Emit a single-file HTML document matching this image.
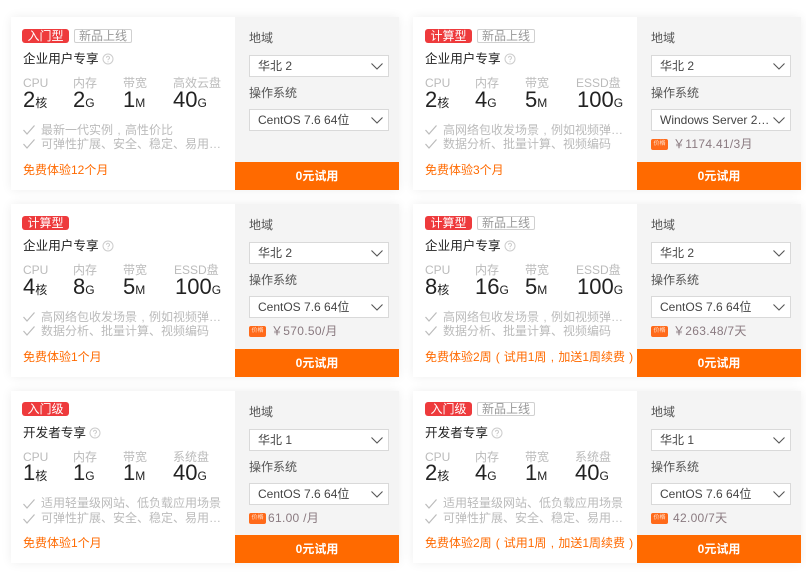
<!DOCTYPE html>
<html lang="zh-CN"><head><meta charset="utf-8"><title>试用</title>
<style>
html,body{margin:0;padding:0;background:#fff;width:806px;height:572px;overflow:hidden}
body{font-family:"Liberation Sans","Noto Sans CJK SC",sans-serif;font-size:12px;position:relative}
svg{display:block}
.c{position:absolute;width:388px;height:173px;background:#fff;box-shadow:0 0 10px rgba(0,0,0,.07)}
.c div,.c svg{position:absolute;white-space:nowrap}
.r{left:224px;top:0;width:164px;height:173px;background:#f4f4f4}
.t{left:11px;top:12px;width:47px;height:14px;line-height:14px;background:#ee3a3c;color:#fff;text-align:center;border-radius:3px}
.rc .t{left:12px}
.n{left:63px;top:12px;width:56px;height:12px;line-height:12px;border:1px solid #d0d0d0;border-radius:2px;color:#999;text-align:center}
.rc .n{left:64px}
.h{left:12px;top:33px;font-size:12.6px;line-height:18px;color:#222}
.q{top:36px}
.l{top:59px;line-height:14px;color:#bbb}
.v{top:70px;line-height:26px;font-size:22px;color:#222}
.v small{font-size:12px}
.k{left:12px}
.f{left:30px;line-height:14px;color:#bbb;width:180px}
.fr{left:12px;top:145px;line-height:16px;color:#ff6a00}
.lb{left:238px;line-height:16px;color:#555}
.s{left:238px;width:138px;height:20px;line-height:20px;background:#fff;border:1px solid #d9d9d9;color:#444}
.s span{position:absolute;left:8px;top:0}
.c .ar{left:121px;top:7px}
.b{left:224px;top:145px;width:164px;height:28px;line-height:28px;background:#ff6a00;color:#fff;text-align:center;font-weight:bold}
.pt{left:238px;top:122px;width:17px;height:11px;background:#ff6a1a;border-radius:2px;color:#ffe4d0;font-size:6px;line-height:11px;text-align:center}
.p{left:260px;top:119px;line-height:16px;color:#8a7a80;letter-spacing:.3px}
.pw{display:inline-block;width:12px;text-align:center}
.c3{height:172px}
.c3 .r{height:172px}
.c3 .t,.c3 .n{top:11px}
.c3 .v{top:69px}
.c3 .fr{top:144px}
.c3 .b{top:144px}
</style></head><body>

<div class="c" style="left:11px;top:17px">
<div class="r"></div>
<div class="t">入门型</div><div class="n">新品上线</div>
<div class="h">企业用户专享</div>
<svg class="q" style="left:91px" width="12" height="12" viewBox="0 0 12 12"><circle cx="6" cy="6" r="5" fill="none" stroke="#ccc"/><path d="M4.5 4.8a1.5 1.5 0 1 1 2.2 1.3c-.5.3-.7.5-.7 1.1M6 8.2v1" fill="none" stroke="#ccc"/></svg>
<div class="l" style="left:12px">CPU</div><div class="l" style="left:62px">内存</div><div class="l" style="left:112px">带宽</div><div class="l" style="left:162px">高效云盘</div>
<div class="v" style="left:12px">2<small>核</small></div><div class="v" style="left:62px">2<small>G</small></div><div class="v" style="left:112px">1<small>M</small></div><div class="v" style="left:162px">40<small>G</small></div>
<svg class="k" style="top:108px" width="12" height="10" viewBox="0 0 12 10"><path d="M.5 5l3.5 4L11.5.5" fill="none" stroke="#bbb" stroke-width="1.2"/></svg><div class="f" style="top:106px">最新一代实例<span class="pw">,</span>高性价比</div>
<svg class="k" style="top:122px" width="12" height="10" viewBox="0 0 12 10"><path d="M.5 5l3.5 4L11.5.5" fill="none" stroke="#bbb" stroke-width="1.2"/></svg><div class="f" style="top:120px">可弹性扩展、安全、稳定、易用…</div>
<div class="fr">免费体验12个月</div>
<div class="lb" style="top:13px">地域</div>
<div class="s" style="top:38px"><span>华北 2</span><svg class="ar" width="12" height="7" viewBox="0 0 12 7"><path d="M.5.5L6 6 11.5.5" fill="none" stroke="#555" stroke-width="1.1"/></svg></div>
<div class="lb" style="top:68px">操作系统</div>
<div class="s" style="top:92px"><span>CentOS 7.6 64位</span><svg class="ar" width="12" height="7" viewBox="0 0 12 7"><path d="M.5.5L6 6 11.5.5" fill="none" stroke="#555" stroke-width="1.1"/></svg></div>
<div class="b">0元试用</div>
</div>

<div class="c rc" style="left:413px;top:17px">
<div class="r"></div>
<div class="t">计算型</div><div class="n">新品上线</div>
<div class="h">企业用户专享</div>
<svg class="q" style="left:91px" width="12" height="12" viewBox="0 0 12 12"><circle cx="6" cy="6" r="5" fill="none" stroke="#ccc"/><path d="M4.5 4.8a1.5 1.5 0 1 1 2.2 1.3c-.5.3-.7.5-.7 1.1M6 8.2v1" fill="none" stroke="#ccc"/></svg>
<div class="l" style="left:12px">CPU</div><div class="l" style="left:62px">内存</div><div class="l" style="left:112px">带宽</div><div class="l" style="left:163px">ESSD盘</div>
<div class="v" style="left:12px">2<small>核</small></div><div class="v" style="left:62px">4<small>G</small></div><div class="v" style="left:112px">5<small>M</small></div><div class="v" style="left:164px">100<small>G</small></div>
<svg class="k" style="top:108px" width="12" height="10" viewBox="0 0 12 10"><path d="M.5 5l3.5 4L11.5.5" fill="none" stroke="#bbb" stroke-width="1.2"/></svg><div class="f" style="top:106px">高网络包收发场景<span class="pw">,</span>例如视频弹…</div>
<svg class="k" style="top:122px" width="12" height="10" viewBox="0 0 12 10"><path d="M.5 5l3.5 4L11.5.5" fill="none" stroke="#bbb" stroke-width="1.2"/></svg><div class="f" style="top:120px">数据分析、批量计算、视频编码</div>
<div class="fr">免费体验3个月</div>
<div class="lb" style="top:13px">地域</div>
<div class="s" style="top:38px"><span>华北 2</span><svg class="ar" width="12" height="7" viewBox="0 0 12 7"><path d="M.5.5L6 6 11.5.5" fill="none" stroke="#555" stroke-width="1.1"/></svg></div>
<div class="lb" style="top:68px">操作系统</div>
<div class="s" style="top:92px"><span>Windows Server 2…</span><svg class="ar" width="12" height="7" viewBox="0 0 12 7"><path d="M.5.5L6 6 11.5.5" fill="none" stroke="#555" stroke-width="1.1"/></svg></div>
<div class="pt">价格</div><div class="p">￥1174.41/3月</div>
<div class="b">0元试用</div>
</div>

<div class="c" style="left:11px;top:204px">
<div class="r"></div>
<div class="t">计算型</div>
<div class="h">企业用户专享</div>
<svg class="q" style="left:91px" width="12" height="12" viewBox="0 0 12 12"><circle cx="6" cy="6" r="5" fill="none" stroke="#ccc"/><path d="M4.5 4.8a1.5 1.5 0 1 1 2.2 1.3c-.5.3-.7.5-.7 1.1M6 8.2v1" fill="none" stroke="#ccc"/></svg>
<div class="l" style="left:12px">CPU</div><div class="l" style="left:62px">内存</div><div class="l" style="left:112px">带宽</div><div class="l" style="left:163px">ESSD盘</div>
<div class="v" style="left:12px">4<small>核</small></div><div class="v" style="left:62px">8<small>G</small></div><div class="v" style="left:112px">5<small>M</small></div><div class="v" style="left:164px">100<small>G</small></div>
<svg class="k" style="top:108px" width="12" height="10" viewBox="0 0 12 10"><path d="M.5 5l3.5 4L11.5.5" fill="none" stroke="#bbb" stroke-width="1.2"/></svg><div class="f" style="top:106px">高网络包收发场景<span class="pw">,</span>例如视频弹…</div>
<svg class="k" style="top:122px" width="12" height="10" viewBox="0 0 12 10"><path d="M.5 5l3.5 4L11.5.5" fill="none" stroke="#bbb" stroke-width="1.2"/></svg><div class="f" style="top:120px">数据分析、批量计算、视频编码</div>
<div class="fr">免费体验1个月</div>
<div class="lb" style="top:13px">地域</div>
<div class="s" style="top:38px"><span>华北 2</span><svg class="ar" width="12" height="7" viewBox="0 0 12 7"><path d="M.5.5L6 6 11.5.5" fill="none" stroke="#555" stroke-width="1.1"/></svg></div>
<div class="lb" style="top:68px">操作系统</div>
<div class="s" style="top:92px"><span>CentOS 7.6 64位</span><svg class="ar" width="12" height="7" viewBox="0 0 12 7"><path d="M.5.5L6 6 11.5.5" fill="none" stroke="#555" stroke-width="1.1"/></svg></div>
<div class="pt">价格</div><div class="p">￥570.50/月</div>
<div class="b">0元试用</div>
</div>

<div class="c rc" style="left:413px;top:204px">
<div class="r"></div>
<div class="t">计算型</div><div class="n">新品上线</div>
<div class="h">企业用户专享</div>
<svg class="q" style="left:91px" width="12" height="12" viewBox="0 0 12 12"><circle cx="6" cy="6" r="5" fill="none" stroke="#ccc"/><path d="M4.5 4.8a1.5 1.5 0 1 1 2.2 1.3c-.5.3-.7.5-.7 1.1M6 8.2v1" fill="none" stroke="#ccc"/></svg>
<div class="l" style="left:12px">CPU</div><div class="l" style="left:62px">内存</div><div class="l" style="left:112px">带宽</div><div class="l" style="left:163px">ESSD盘</div>
<div class="v" style="left:12px">8<small>核</small></div><div class="v" style="left:62px">16<small>G</small></div><div class="v" style="left:112px">5<small>M</small></div><div class="v" style="left:164px">100<small>G</small></div>
<svg class="k" style="top:108px" width="12" height="10" viewBox="0 0 12 10"><path d="M.5 5l3.5 4L11.5.5" fill="none" stroke="#bbb" stroke-width="1.2"/></svg><div class="f" style="top:106px">高网络包收发场景<span class="pw">,</span>例如视频弹…</div>
<svg class="k" style="top:122px" width="12" height="10" viewBox="0 0 12 10"><path d="M.5 5l3.5 4L11.5.5" fill="none" stroke="#bbb" stroke-width="1.2"/></svg><div class="f" style="top:120px">数据分析、批量计算、视频编码</div>
<div class="fr">免费体验2周<span class="pw">(</span>试用1周<span class="pw">,</span>加送1周续费<span class="pw">)</span></div>
<div class="lb" style="top:13px">地域</div>
<div class="s" style="top:38px"><span>华北 2</span><svg class="ar" width="12" height="7" viewBox="0 0 12 7"><path d="M.5.5L6 6 11.5.5" fill="none" stroke="#555" stroke-width="1.1"/></svg></div>
<div class="lb" style="top:68px">操作系统</div>
<div class="s" style="top:92px"><span>CentOS 7.6 64位</span><svg class="ar" width="12" height="7" viewBox="0 0 12 7"><path d="M.5.5L6 6 11.5.5" fill="none" stroke="#555" stroke-width="1.1"/></svg></div>
<div class="pt">价格</div><div class="p">￥263.48/7天</div>
<div class="b">0元试用</div>
</div>

<div class="c c3" style="left:11px;top:391px">
<div class="r"></div>
<div class="t">入门级</div>
<div class="h">开发者专享</div>
<svg class="q" style="left:78px" width="12" height="12" viewBox="0 0 12 12"><circle cx="6" cy="6" r="5" fill="none" stroke="#ccc"/><path d="M4.5 4.8a1.5 1.5 0 1 1 2.2 1.3c-.5.3-.7.5-.7 1.1M6 8.2v1" fill="none" stroke="#ccc"/></svg>
<div class="l" style="left:12px">CPU</div><div class="l" style="left:62px">内存</div><div class="l" style="left:112px">带宽</div><div class="l" style="left:162px">系统盘</div>
<div class="v" style="left:12px">1<small>核</small></div><div class="v" style="left:62px">1<small>G</small></div><div class="v" style="left:112px">1<small>M</small></div><div class="v" style="left:162px">40<small>G</small></div>
<svg class="k" style="top:108px" width="12" height="10" viewBox="0 0 12 10"><path d="M.5 5l3.5 4L11.5.5" fill="none" stroke="#bbb" stroke-width="1.2"/></svg><div class="f" style="top:105px">适用轻量级网站、低负载应用场景</div>
<svg class="k" style="top:123px" width="12" height="10" viewBox="0 0 12 10"><path d="M.5 5l3.5 4L11.5.5" fill="none" stroke="#bbb" stroke-width="1.2"/></svg><div class="f" style="top:120px">可弹性扩展、安全、稳定、易用…</div>
<div class="fr">免费体验1个月</div>
<div class="lb" style="top:13px">地域</div>
<div class="s" style="top:38px"><span>华北 1</span><svg class="ar" width="12" height="7" viewBox="0 0 12 7"><path d="M.5.5L6 6 11.5.5" fill="none" stroke="#555" stroke-width="1.1"/></svg></div>
<div class="lb" style="top:68px">操作系统</div>
<div class="s" style="top:92px"><span>CentOS 7.6 64位</span><svg class="ar" width="12" height="7" viewBox="0 0 12 7"><path d="M.5.5L6 6 11.5.5" fill="none" stroke="#555" stroke-width="1.1"/></svg></div>
<div class="pt">价格</div><div class="p" style="left:257px">61.00 /月</div>
<div class="b">0元试用</div>
</div>

<div class="c rc c3" style="left:413px;top:391px">
<div class="r"></div>
<div class="t">入门级</div><div class="n">新品上线</div>
<div class="h">开发者专享</div>
<svg class="q" style="left:78px" width="12" height="12" viewBox="0 0 12 12"><circle cx="6" cy="6" r="5" fill="none" stroke="#ccc"/><path d="M4.5 4.8a1.5 1.5 0 1 1 2.2 1.3c-.5.3-.7.5-.7 1.1M6 8.2v1" fill="none" stroke="#ccc"/></svg>
<div class="l" style="left:12px">CPU</div><div class="l" style="left:62px">内存</div><div class="l" style="left:112px">带宽</div><div class="l" style="left:162px">系统盘</div>
<div class="v" style="left:12px">2<small>核</small></div><div class="v" style="left:62px">4<small>G</small></div><div class="v" style="left:112px">1<small>M</small></div><div class="v" style="left:162px">40<small>G</small></div>
<svg class="k" style="top:108px" width="12" height="10" viewBox="0 0 12 10"><path d="M.5 5l3.5 4L11.5.5" fill="none" stroke="#bbb" stroke-width="1.2"/></svg><div class="f" style="top:105px">适用轻量级网站、低负载应用场景</div>
<svg class="k" style="top:123px" width="12" height="10" viewBox="0 0 12 10"><path d="M.5 5l3.5 4L11.5.5" fill="none" stroke="#bbb" stroke-width="1.2"/></svg><div class="f" style="top:120px">可弹性扩展、安全、稳定、易用…</div>
<div class="fr">免费体验2周<span class="pw">(</span>试用1周<span class="pw">,</span>加送1周续费<span class="pw">)</span></div>
<div class="lb" style="top:13px">地域</div>
<div class="s" style="top:38px"><span>华北 1</span><svg class="ar" width="12" height="7" viewBox="0 0 12 7"><path d="M.5.5L6 6 11.5.5" fill="none" stroke="#555" stroke-width="1.1"/></svg></div>
<div class="lb" style="top:68px">操作系统</div>
<div class="s" style="top:92px"><span>CentOS 7.6 64位</span><svg class="ar" width="12" height="7" viewBox="0 0 12 7"><path d="M.5.5L6 6 11.5.5" fill="none" stroke="#555" stroke-width="1.1"/></svg></div>
<div class="pt">价格</div><div class="p">42.00/7天</div>
<div class="b">0元试用</div>
</div>

</body></html>
